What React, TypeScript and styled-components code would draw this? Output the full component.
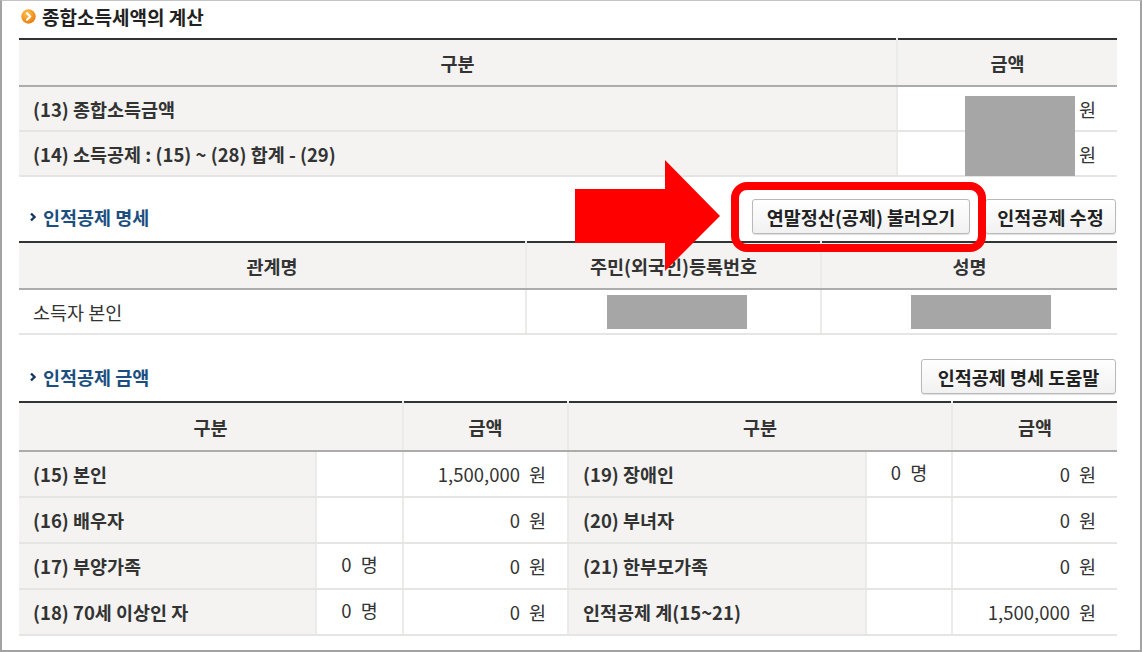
import React from 'react';
import styled, { createGlobalStyle } from 'styled-components';

const Global = createGlobalStyle`
  html, body { margin: 0; padding: 0; background: #fff; }
  body { font-family: "Noto Sans CJK KR", "Noto Sans", sans-serif; color: #333; }
  * { box-sizing: border-box; }
`;

const Frame = styled.div`
  position: relative;
  width: 1142px;
  height: 652px;
  border: 2px solid #a3a3a3;
  border-top: 1px solid #c4c4c4;
  padding: 0 23px 0 17px;
  display: flex;
  flex-direction: column;
  overflow: hidden;
`;

const TitleRow = styled.div`
  height: 30px;
  margin-bottom: 7px;
  display: flex;
  align-items: center;
  gap: 6px;
  padding-left: 2px;
`;

const TitleText = styled.h2`
  margin: 0;
  font-size: 19px;
  font-weight: 700;
  color: #222;
`;

const SectionRow = styled.div<{ $top: number }>`
  padding-top: ${(p) => p.$top}px;
  margin-bottom: 7px;
  display: flex;
  align-items: center;
  height: ${(p) => p.$top + 35}px;
`;

const SectionTitle = styled.h3`
  margin: 0;
  padding-left: 11px;
  display: flex;
  align-items: center;
  gap: 7px;
  font-size: 18.5px;
  font-weight: 700;
  color: #1c4f80;
  flex: 1;
`;

const ButtonGroup = styled.div`
  display: flex;
  gap: 15px;
  margin-right: 1px;
`;

const Button = styled.button<{ $w: number }>`
  width: ${(p) => p.$w}px;
  height: 35px;
  padding: 0;
  border: 1px solid #b9b9b9;
  border-radius: 3px;
  background: linear-gradient(#ffffff, #f1f1f1);
  box-shadow: 0 1px 1px rgba(0, 0, 0, 0.12);
  font-family: inherit;
  font-size: 18.5px;
  font-weight: 700;
  color: #222;
  white-space: nowrap;
`;

const Table = styled.table`
  width: 100%;
  border-collapse: collapse;
  table-layout: fixed;
  border-top: 2px solid #333;
`;

const Th = styled.th<{ $h?: number }>`
  height: ${(p) => p.$h ?? 47}px;
  padding: 0;
  background: #f4f3f1;
  border-bottom: 2px solid #acacac;
  border-left: 2px solid #ebebea;
  font-size: 18.5px;
  font-weight: 700;
  color: #333;
  text-align: center;
  &:first-child { border-left: none; }
`;

const Td = styled.td<{ $label?: boolean; $align?: 'left' | 'right' | 'center'; $bold?: boolean; $h?: number; $lift?: boolean }>`
  height: ${(p) => p.$h ?? 45}px;
  padding: ${(p) => (p.$align === 'right' ? '0 21px 0 0' : p.$align === 'center' ? '0' : '0 0 0 14px')};
  padding-bottom: ${(p) => (p.$lift ? '5px' : '0')};
  background: ${(p) => (p.$label ? '#f4f3f1' : '#fff')};
  border-bottom: 2px solid #e5e5e4;
  border-left: 2px solid #ebebea;
  font-size: 18.5px;
  font-weight: ${(p) => (p.$bold ? 700 : 400)};
  color: #333;
  text-align: ${(p) => p.$align ?? 'left'};
  white-space: nowrap;
  &:first-child { border-left: none; }
`;

const Unit = styled.span`
  margin-left: 9px;
`;

const Redact = styled.span<{ $shift: number }>`
  display: inline-block;
  vertical-align: middle;
  width: 140px;
  height: 34px;
  background: #a6a6a6;
  margin-left: ${(p) => p.$shift * 2}px;
`;

const RedactOverlay = styled.div`
  position: absolute;
  left: 963px;
  top: 95px;
  width: 110px;
  height: 80px;
  background: #a6a6a6;
`;

const Highlight = styled.div`
  position: absolute;
  left: 729px;
  top: 181px;
  width: 255px;
  height: 70px;
  border: 8px solid #ff0000;
  border-radius: 16px;
  pointer-events: none;
`;

const ArrowSvg = styled.svg`
  position: absolute;
  left: 573px;
  top: 159px;
`;

const OrangeIcon = () => (
  <svg width="15" height="15" viewBox="0 0 15 15">
    <defs>
      <radialGradient id="og" cx="40%" cy="30%" r="75%">
        <stop offset="0%" stopColor="#ffc24a" />
        <stop offset="100%" stopColor="#e8780a" />
      </radialGradient>
    </defs>
    <circle cx="7.5" cy="7.5" r="7.2" fill="url(#og)" />
    <path d="M6 4.2 L9.2 7.5 L6 10.8" fill="none" stroke="#fff" strokeWidth="2.2" strokeLinecap="round" strokeLinejoin="round" />
  </svg>
);

const Chevron = () => (
  <svg width="6" height="10" viewBox="0 0 6 10">
    <path d="M1 1.5 L4.5 5 L1 8.5" fill="none" stroke="#17375e" strokeWidth="2.4" />
  </svg>
);

const Money = ({ v }: { v: string }) => (
  <>
    {v}
    <Unit>원</Unit>
  </>
);

const Count = ({ v }: { v: string }) => (
  <>
    {v}
    <Unit>명</Unit>
  </>
);

type Row = { l1: string; c1: string; a1: string; l2: string; c2: string; a2: string };

const rows: Row[] = [
  { l1: '(15) 본인', c1: '', a1: '1,500,000', l2: '(19) 장애인', c2: '0', a2: '0' },
  { l1: '(16) 배우자', c1: '', a1: '0', l2: '(20) 부녀자', c2: '', a2: '0' },
  { l1: '(17) 부양가족', c1: '0', a1: '0', l2: '(21) 한부모가족', c2: '', a2: '0' },
  { l1: '(18) 70세 이상인 자', c1: '0', a1: '0', l2: '인적공제 계(15~21)', c2: '', a2: '1,500,000' },
];

export default function App() {
  return (
    <>
      <Global />
      <Frame>
        <TitleRow>
          <OrangeIcon />
          <TitleText>종합소득세액의 계산</TitleText>
        </TitleRow>

        <Table>
          <colgroup>
            <col style={{ width: 878 }} />
            <col style={{ width: 220 }} />
          </colgroup>
          <thead>
            <tr>
              <Th>구분</Th>
              <Th>금액</Th>
            </tr>
          </thead>
          <tbody>
            <tr>
              <Td $label $bold>(13) 종합소득금액</Td>
              <Td $align="right">원</Td>
            </tr>
            <tr>
              <Td $label $bold>(14) 소득공제 : (15) ~ (28) 합계 - (29)</Td>
              <Td $align="right">원</Td>
            </tr>
          </tbody>
        </Table>

        <SectionRow $top={22}>
          <SectionTitle>
            <Chevron />
            인적공제 명세
          </SectionTitle>
          <ButtonGroup>
            <Button $w={218}>연말정산(공제) 불러오기</Button>
            <Button $w={131}>인적공제 수정</Button>
          </ButtonGroup>
        </SectionRow>

        <Table>
          <colgroup>
            <col style={{ width: 507 }} />
            <col style={{ width: 295 }} />
            <col style={{ width: 296 }} />
          </colgroup>
          <thead>
            <tr>
              <Th>관계명</Th>
              <Th>주민(외국인)등록번호</Th>
              <Th>성명</Th>
            </tr>
          </thead>
          <tbody>
            <tr>
              <Td>소득자 본인</Td>
              <Td $align="center"><Redact $shift={3} /></Td>
              <Td $align="center"><Redact $shift={11} /></Td>
            </tr>
          </tbody>
        </Table>

        <SectionRow $top={24}>
          <SectionTitle>
            <Chevron />
            인적공제 금액
          </SectionTitle>
          <ButtonGroup>
            <Button $w={195}>인적공제 명세 도움말</Button>
          </ButtonGroup>
        </SectionRow>

        <Table>
          <colgroup>
            <col style={{ width: 297 }} />
            <col style={{ width: 87 }} />
            <col style={{ width: 165 }} />
            <col style={{ width: 298 }} />
            <col style={{ width: 86 }} />
            <col style={{ width: 165 }} />
          </colgroup>
          <thead>
            <tr>
              <Th colSpan={2} $h={49}>구분</Th>
              <Th $h={49}>금액</Th>
              <Th colSpan={2} $h={49}>구분</Th>
              <Th $h={49}>금액</Th>
            </tr>
          </thead>
          <tbody>
            {rows.map((r) => (
              <tr key={r.l1}>
                <Td $label $bold $h={46}>{r.l1}</Td>
                <Td $align="center" $lift $h={46}>{r.c1 && <Count v={r.c1} />}</Td>
                <Td $align="right" $h={46}><Money v={r.a1} /></Td>
                <Td $label $bold $h={46}>{r.l2}</Td>
                <Td $align="center" $lift $h={46}>{r.c2 && <Count v={r.c2} />}</Td>
                <Td $align="right" $h={46}><Money v={r.a2} /></Td>
              </tr>
            ))}
          </tbody>
        </Table>

        <RedactOverlay />
        <ArrowSvg width="146" height="112" viewBox="0 0 146 112">
          <polygon points="0,29 90,29 90,0 145,56 90,111 90,83 0,83" fill="#ff0000" />
        </ArrowSvg>
        <Highlight />
      </Frame>
    </>
  );
}
